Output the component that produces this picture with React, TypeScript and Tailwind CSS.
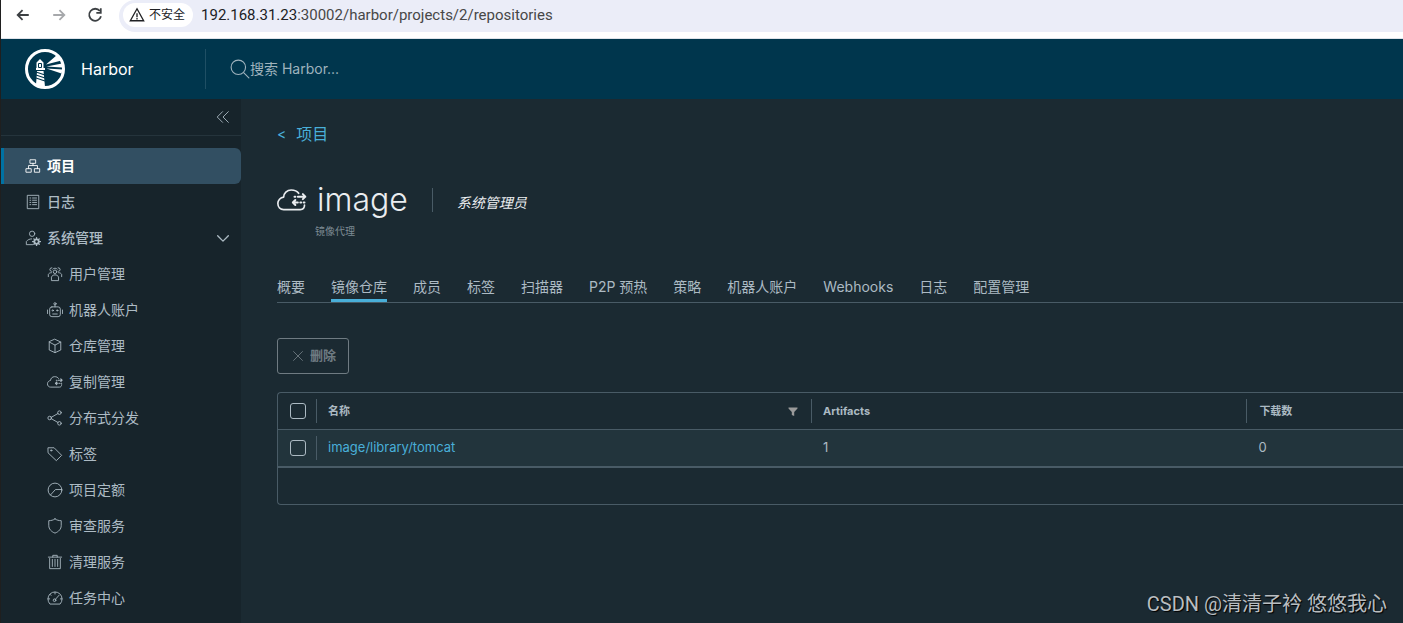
import React from 'react';

interface IconProps {
  className?: string;
}

interface IconBaseProps extends IconProps {
  children: React.ReactNode;
  strokeWidth?: number;
}

const Icon: React.FC<IconBaseProps> = ({ className = 'size-4', strokeWidth = 2, children }) => (
  <svg
    className={`shrink-0 ${className}`}
    viewBox="0 0 36 36"
    fill="none"
    stroke="currentColor"
    strokeWidth={strokeWidth}
    strokeLinecap="round"
    strokeLinejoin="round"
    aria-hidden="true"
  >
    {children}
  </svg>
);

const ProjectsIcon = () => (
  <Icon>
    <path d="M12 4h12v8H12zM3 24h11v8H3zM22 24h11v8H22zM18 12v5M8 24v-7h20v7" />
  </Icon>
);

const LogsIcon = () => (
  <Icon>
    <path d="M6 3h25v30H6z" />
    <path d="M11 9h2M11 14h2M11 19h2M11 24h2M17 9h9M17 14h9M17 19h9M17 24h9" />
  </Icon>
);

const AdminIcon = () => (
  <Icon>
    <circle cx="16" cy="8.5" r="6" />
    <path d="M17 33H3v-7c3-4 7-6 12-6" />
    <circle cx="26" cy="26" r="5" strokeWidth="4" />
    <path d="M26 17v3M26 32v3M17 26h3M32 26h3M20 20l2 2M30 30l2 2M32 20l-2 2M22 30l-2 2" strokeWidth="3" />
  </Icon>
);

const UsersIcon = () => (
  <Icon>
    <circle cx="18" cy="13" r="4" />
    <path d="M10 32v-7c1-3 4-5 8-5s7 2 8 5v7z" />
    <path d="M11 4a4 4 0 1 0-1 8M3 24v-5c1-2 3-4 7-4M25 4a4 4 0 1 1 1 8M33 24v-5c-1-2-3-4-7-4M13 7c2-3 8-3 10 0" />
  </Icon>
);

const RobotIcon = () => (
  <Icon>
    <rect x="6" y="11" width="24" height="22" rx="5" />
    <circle cx="18" cy="4" r="2.5" />
    <path d="M18 7v4M1 18v8M35 18v8M13 27h10" />
    <circle cx="13" cy="19" r="1.5" />
    <circle cx="23" cy="19" r="1.5" />
  </Icon>
);

const RegistryIcon = () => (
  <Icon>
    <path d="M18 3l13 6v18l-13 6-13-6V9zM5 9l13 7 13-7M18 16v17" />
  </Icon>
);

const CloudTrafficIcon: React.FC<IconProps> = ({ className }) => (
  <Icon className={className}>
    <path d="M26 10C24 7 21 6 17 6c-5 0-9 4-9 8.500-4 .5-7 4-7 7.500 0 4.500 3 7.500 7 7.500h20c3 0 5-2 5-5.500" />
    <path d="M21 14h1M25 14h9M31 11l3 3-3 3M19 21h6M28 21h1M32 21h1M22 18l-3 3 3 3" strokeWidth="2.400" />
  </Icon>
);

const ShareIcon = () => (
  <Icon>
    <circle cx="6" cy="18" r="4" />
    <circle cx="28" cy="6" r="4" />
    <circle cx="28" cy="30" r="4" />
    <path d="M9.500 16.500L24.500 8M9.500 19.500L24.500 28" />
  </Icon>
);

const TagIcon = () => (
  <Icon>
    <path d="M3 4h13l17 17-12 12L3 16z" />
    <circle cx="9.5" cy="10" r="1.5" />
  </Icon>
);

const QuotaIcon = () => (
  <Icon>
    <circle cx="18" cy="18" r="15.500" />
    <path d="M33 17H19L8 29" />
  </Icon>
);

const ShieldIcon = () => (
  <Icon>
    <path d="M18 2c4 3 9 4 14 4v11c0 8-6 14-14 17C10 31 4 25 4 17V6c5 0 10-1 14-4z" />
  </Icon>
);

const TrashIcon = () => (
  <Icon>
    <path d="M3 7h30M13 7V3h10v4M6 10v23h24V10M12 12v16M18 12v16M24 12v16" />
  </Icon>
);

const DashboardIcon = () => (
  <Icon>
    <path d="M6 31A16 16 0 1 1 30 31z" />
    <path d="M18 5v4M2 20h4M30 20h4M7 10l2 2M18 22l9-10" />
    <circle cx="17" cy="23" r="3" />
  </Icon>
);

const HarborLogo = () => (
  <svg className="size-10 shrink-0" viewBox="0 0 40 40" aria-hidden="true">
    <circle cx="20" cy="20" r="18.5" fill="none" stroke="#fff" strokeWidth="3" />
    <g fill="#fff">
      <path d="M11.500 13.500L15 10l3.500 3.500V19H20v2h-9v-2h.5z" />
      <path d="M12 22h6.500l1.500 16-9-2z" />
      <path d="M21 15.500L32 6l4.500 5.500zM21.500 17.500L37 14.500v4zM21.500 19.500l16 1-1 4z" />
    </g>
    <path d="M13.500 14.500h3v4h-3z" fill="none" stroke="#00364d" strokeWidth="1" />
    <path d="M11 23l9 3M11 26l9 3M11 29l9 3" stroke="#00364d" strokeWidth="1.2" />
  </svg>
);

interface NavItem {
  label: string;
  icon: React.FC;
}

const adminItems: NavItem[] = [
  { label: '用户管理', icon: UsersIcon },
  { label: '机器人账户', icon: RobotIcon },
  { label: '仓库管理', icon: RegistryIcon },
  { label: '复制管理', icon: CloudTrafficIcon },
  { label: '分布式分发', icon: ShareIcon },
  { label: '标签', icon: TagIcon },
  { label: '项目定额', icon: QuotaIcon },
  { label: '审查服务', icon: ShieldIcon },
  { label: '清理服务', icon: TrashIcon },
  { label: '任务中心', icon: DashboardIcon },
];

const tabs = ['概要', '镜像仓库', '成员', '标签', '扫描器', 'P2P 预热', '策略', '机器人账户', 'Webhooks', '日志', '配置管理'];

const repositories = [{ name: 'image/library/tomcat', artifacts: 1, pulls: 0 }];

const BrowserBar = () => (
  <div className="flex h-[39px] items-start border-b border-[#dfe3ea] bg-white">
    <div className="flex h-[30px] shrink-0 items-center gap-5 pl-3.5 text-[#3c4043]">
      <button type="button" aria-label="Back">
        <Icon className="size-4" strokeWidth={4}>
          <path d="M31 18H6M17 7L6 18l11 11" strokeLinecap="butt" strokeLinejoin="miter" />
        </Icon>
      </button>
      <button type="button" aria-label="Forward" className="text-[#a6a8ab]">
        <Icon className="size-4" strokeWidth={4}>
          <path d="M5 18h25M19 7l11 11-11 11" strokeLinecap="butt" strokeLinejoin="miter" />
        </Icon>
      </button>
      <button type="button" aria-label="Reload">
        <Icon className="size-4" strokeWidth={4}>
          <path d="M29 9a13.500 13.500 0 1 0 2.500 12M31 3v10H21" strokeLinecap="butt" strokeLinejoin="miter" />
        </Icon>
      </button>
    </div>
    <div className="ml-4 flex h-8 grow items-center rounded-l-2xl bg-[#ebedf8] pb-0.5 pl-1">
      <span className="flex h-6 items-center gap-1 rounded-full bg-white px-1.5 pr-2 text-xs text-[#202124]">
        <Icon className="size-4" strokeWidth={3}>
          <path d="M18 4L33 31H3zM18 14v9M18 25v3" strokeLinejoin="miter" strokeLinecap="butt" />
        </Icon>
        不安全
      </span>
      <span className="ml-2 font-['Roboto'] text-[15px] text-[#474747]">
        <span className="text-[#202124]">192.168.31.23</span>:30002/harbor/projects/2/repositories
      </span>
    </div>
  </div>
);

const Header = () => (
  <header className="flex h-[60px] items-center bg-[#00364d]">
    <a href="#home" className="flex w-[204px] items-center gap-4 pl-6 text-base text-white">
      <HarborLogo />
      Harbor
    </a>
    <label className="flex h-10 grow items-center border-l border-[#1f4f64] pl-6 text-[#9fb3bd]">
      <Icon className="size-5">
        <circle cx="15" cy="15" r="13" />
        <path d="M25 25l9 9" />
      </Icon>
      <input
        type="text"
        aria-label="搜索"
        placeholder="搜索 Harbor..."
        className="w-64 bg-transparent text-sm outline-none placeholder:text-[#9fb3bd]"
      />
    </label>
  </header>
);

const Sidebar = () => (
  <nav className="w-60 shrink-0 bg-[#17242b] text-sm text-[#adbbc4]">
    <div className="mb-3 flex h-[37px] items-center justify-end border-b border-[#25343c] pr-2.5">
      <button type="button" aria-label="Collapse">
        <Icon className="size-4">
          <path d="M17 6L5 18l12 12M30 6L18 18l12 12" />
        </Icon>
      </button>
    </div>
    <a href="#projects" className="flex h-9 items-center gap-1.5 rounded-r-md border-l-3 border-[#0072a3] bg-[#324f62] pl-[21px] font-bold text-white">
      <ProjectsIcon />
      项目
    </a>
    <a href="#logs" className="flex h-9 items-center gap-1.5 pl-6 font-medium">
      <LogsIcon />
      日志
    </a>
    <button type="button" className="flex h-9 w-full items-center gap-1.5 pl-6 pr-2.5 text-left font-medium">
      <AdminIcon />
      <span className="grow">系统管理</span>
      <Icon className="size-4" strokeWidth={3}>
        <path d="M6 13l12 12 12-12" />
      </Icon>
    </button>
    <ul>
      {adminItems.map(({ label, icon: ItemIcon }) => (
        <li key={label}>
          <a href="#admin" className="flex h-9 items-center gap-1.5 pl-[46px]">
            <ItemIcon />
            {label}
          </a>
        </li>
      ))}
    </ul>
  </nav>
);

const RepositoryTable = () => (
  <div className="mt-[18px] rounded-l-sm border border-r-0 border-[#495b66]">
    <table className="w-full table-fixed border-collapse text-left text-[13px] text-[#acbac3]">
      <colgroup>
        <col className="w-[38px]" />
        <col className="w-[44%]" />
        <col className="w-[38.7%]" />
        <col />
      </colgroup>
      <thead>
        <tr className="h-9 text-[11px]">
          <th className="p-0 pl-3">
            <input type="checkbox" aria-label="全选" className="block size-4 appearance-none rounded-[3px] border border-[#acbac3]" />
          </th>
          <th className="p-0">
            <div className="flex h-6 items-center justify-between border-l border-[#495b66] pl-[11px] pr-3">
              名称
              <button type="button" aria-label="筛选">
                <svg className="size-3" viewBox="0 0 12 12" fill="#9a9a9a" aria-hidden="true">
                  <path d="M1.500 2.500h9v1L7.200 7v4L4.800 10V7L1.500 3.500z" />
                </svg>
              </button>
            </div>
          </th>
          <th className="p-0">
            <div className="flex h-6 items-center border-l border-[#495b66] pl-[11px]">Artifacts</div>
          </th>
          <th className="p-0">
            <div className="flex h-6 items-center border-l border-[#495b66] pl-3">下载数</div>
          </th>
        </tr>
      </thead>
      <tbody>
        {repositories.map((repo) => (
          <tr key={repo.name} className="h-[38px] border-t border-b-2 border-[#495b66] bg-[#22343c]">
            <td className="p-0 pl-3">
              <input type="checkbox" aria-label={repo.name} className="block size-4 appearance-none rounded-[3px] border border-[#acbac3]" />
            </td>
            <td className="p-0">
              <div className="flex h-6 items-center border-l border-[#495b66] pl-[11px]">
                <a href="#repository" className="text-[#49afd9]">{repo.name}</a>
              </div>
            </td>
            <td className="p-0 pl-3">{repo.artifacts}</td>
            <td className="p-0 pl-3">{repo.pulls}</td>
          </tr>
        ))}
      </tbody>
    </table>
    <div className="h-9" />
  </div>
);

const App: React.FC = () => (
  <div className="relative flex min-h-screen flex-col overflow-hidden border-l border-[#1f1f1f] bg-[#1b2a32] font-['Inter','Noto_Sans_CJK_SC',sans-serif]">
    <BrowserBar />
    <Header />
    <div className="flex grow">
      <Sidebar />
      <main className="min-w-0 grow pl-9 pt-[23px]">
        <a href="#projects" className="flex h-6 items-center gap-2.5 text-base text-[#49afd9]">
          <span className="text-sm">&lt;</span>
          项目
        </a>
        <div className="mt-[34px] flex h-10 items-center">
          <CloudTrafficIcon className="size-[30px] text-[#eaedf0]" />
          <h1 className="ml-2.5 text-[32px] font-light text-[#eaedf0]">image</h1>
          <span className="ml-6 h-6 border-l border-[#495b66]" />
          <em className="ml-6 pt-1.5 text-sm text-[#eaedf0]">系统管理员</em>
        </div>
        <p className="ml-[38px] mt-1 text-[10px] text-[#7d8b93]">镜像代理</p>
        <div className="mt-7 flex h-9 gap-[26px] border-b border-[#495b66] text-sm text-[#acbac3]">
          {tabs.map((tab) => (
            <button
              key={tab}
              type="button"
              className={
                tab === '镜像仓库'
                  ? 'shrink-0 border-b-3 border-[#49afd9] pt-2'
                  : 'shrink-0 border-b-3 border-transparent pt-2'
              }
            >
              {tab}
            </button>
          ))}
        </div>
        <button
          type="button"
          disabled
          className="mt-[35px] flex h-9 items-center gap-1 rounded-[3px] border border-[#6f7b82] px-3 text-[13px] font-semibold text-[#6f7b82]"
        >
          <Icon className="size-4">
            <path d="M8 8l20 20M28 8L8 28" />
          </Icon>
          删除
        </button>
        <RepositoryTable />
      </main>
    </div>
    <p className="absolute bottom-[5px] right-4 font-['Roboto','Noto_Sans_CJK_SC',sans-serif] text-xl text-[#b9bec1] [text-shadow:1px_1px_1px_#000]">
      CSDN @清清子衿 悠悠我心
    </p>
  </div>
);

export default App;
